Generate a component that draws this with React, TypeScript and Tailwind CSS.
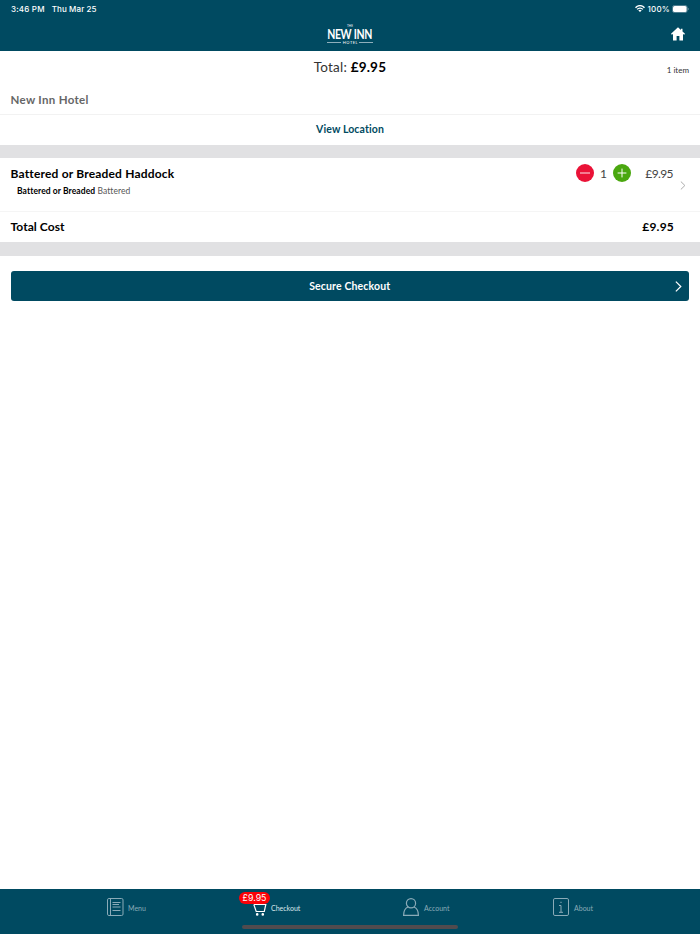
import type { ReactNode } from "react";

interface TabProps {
  label: string;
  labelClass: string;
  className: string;
  icon: ReactNode;
  badge?: string;
}

function Tab({ label, labelClass, className, icon, badge }: TabProps) {
  return (
    <button className={`relative flex h-9 shrink-0 items-center ${className}`}>
      {icon}
      <span className={`whitespace-nowrap pt-[3px] text-[7px] leading-none ${labelClass}`}>{label}</span>
      {badge && (
        <span className="absolute left-[-14px] top-[3px] flex h-3 w-[31px] items-center justify-center rounded-full bg-[#fb0207] font-['Inter'] text-[8.8px] leading-none text-white">
          {badge}
        </span>
      )}
    </button>
  );
}

function StatusBar() {
  return (
    <div className="flex h-[17px] items-center justify-between pl-[11px] pr-[11px] font-['Inter',sans-serif] text-[8px] font-medium leading-none text-white">
      <div className="flex gap-[7px]">
        <span className="tracking-[0.2px]">3:46 PM</span>
        <span className="tracking-[0.1px]">Thu Mar 25</span>
      </div>
      <div className="flex items-center">
        <svg className="mr-[3px] h-[7px] w-[10px]" viewBox="0 0 20 14" fill="none" stroke="white" strokeWidth="2.8">
          <path d="M1 5.3C6-.1 14-.1 19 5.3M4.2 8.8c3.2-3.5 8.4-3.5 11.6 0" />
          <path d="M10 14 6.6 10.8c1.9-1.7 4.9-1.7 6.8 0z" fill="white" stroke="none" />
        </svg>
        <span className="tracking-[0.2px]">100%</span>
        <svg className="ml-[2px] h-2 w-[17px]" viewBox="0 0 17 8">
          <rect x=".4" y=".4" width="14.8" height="7.2" rx="2.2" fill="none" stroke="#8cabb8" strokeWidth=".6" />
          <rect x="1" y="1" width="13.6" height="6" rx="1.5" fill="white" />
          <path d="M15.9 2.8v2.4c1-.4 1-2 0-2.4" fill="#8cabb8" />
        </svg>
      </div>
    </div>
  );
}

function Logo() {
  return (
    <div className="flex w-[45px] flex-col items-center text-white">
      <span className="text-[3px] leading-[3px]">THE</span>
      <span className="scale-x-[0.81] whitespace-nowrap text-[13px] font-bold leading-[13px] tracking-[-0.5px] [word-spacing:0.5px]">
        NEW INN
      </span>
      <div className="flex w-full items-center gap-[1px]">
        <i className="h-px flex-1 bg-[#8fafbb]" />
        <span className="pl-px text-[4px] leading-[4px] tracking-[0.5px]">HOTEL</span>
        <i className="h-px flex-1 bg-[#8fafbb]" />
      </div>
    </div>
  );
}

function Chevron({ className }: { className: string }) {
  return (
    <svg className={className} viewBox="0 0 6 10" fill="none" stroke="currentColor" strokeWidth="1.1">
      <path d="m.6.6 4.5 4.4L.6 9.4" />
    </svg>
  );
}

export default function App() {
  return (
    <div className="flex h-[934px] w-[700px] flex-col overflow-hidden bg-white font-['Lato',sans-serif] text-black">
      <header className="h-[51px] shrink-0 bg-[#004a61]">
        <StatusBar />
        <div className="grid h-[34px] grid-cols-3 items-center">
          <span />
          <div className="flex justify-center pt-px">
            <Logo />
          </div>
          <svg className="mr-[15px] h-[14px] w-[14px] justify-self-end" viewBox="0 0 14 14" fill="white">
            <path d="M7 .3 0 6.7l.8 1 1.2-.6v6.4h3.6V9h2.8v4.5H12V7.100l1.200.6.8-1-2.500-2.300V1.700h-1.600v1.300z" />
          </svg>
        </div>
      </header>

      <main className="flex-1">
        <div className="grid h-[33px] grid-cols-3 items-center px-[11px]">
          <span />
          <p className="pt-px text-center text-[13.5px] leading-none tracking-[0.2px] text-[#333]">
            Total: <b className="font-bold text-black">£9.95</b>
          </p>
          <span className="justify-self-end pt-1 text-[8px] leading-none text-[#333]">1 item</span>
        </div>
        <div className="flex h-[30.5px] items-center border-b border-[#f2f2f2] px-[10.5px] pt-px text-[11.5px] font-bold tracking-[0.32px] text-[#666]">
          New Inn Hotel
        </div>
        <div className="flex h-[30px] items-center justify-center pt-px text-[10.5px] font-bold tracking-[0.12px] text-[#004a61]">
          View Location
        </div>
        <div className="h-[13.5px] bg-[#e1e1e3]" />

        <div className="flex h-[54px] justify-between border-b border-[#f5f5f5] pl-[10.5px] pr-[14px]">
          <div className="pt-[8px]">
            <h2 className="text-[12px] font-bold leading-[15px] tracking-[0.18px]">Battered or Breaded Haddock</h2>
            <p className="ml-[6.5px] mt-[4px] text-[8.5px] leading-[12px] tracking-[0.08px] text-[#555]">
              <b className="text-black">Battered or Breaded</b> Battered
            </p>
          </div>
          <div className="flex">
            <svg className="mt-[6px] h-[18px] w-[18px]" viewBox="0 0 18 18" stroke="white" strokeWidth=".9">
              <circle cx="9" cy="9" r="9" fill="#ea1237" stroke="none" />
              <path d="M4 9h10" />
            </svg>
            <span className="mt-[8px] w-[19px] text-center text-[12px] leading-[15px] text-[#444]">1</span>
            <svg className="mt-[6px] h-[18px] w-[18px]" viewBox="0 0 18 18" stroke="white" strokeWidth="1">
              <circle cx="9" cy="9" r="9" fill="#4aa70f" stroke="none" />
              <path d="M4.6 9h8.8M9 4.6v8.8" />
            </svg>
            <span className="mt-[8px] w-[42px] text-right text-[12px] leading-[15px] tracking-[-0.6px] text-[#444]">
              £9.95
            </span>
            <Chevron className="ml-[7px] mt-[23px] h-[9px] w-[6px] text-[#aaa]" />
          </div>
        </div>
        <div className="flex h-[30px] items-center justify-between pl-[10.5px] pr-[26px] text-[12px] font-bold">
          <span className="tracking-[0.06px]">Total Cost</span>
          <span className="tracking-[0.2px]">£9.95</span>
        </div>
        <div className="h-[14px] bg-[#e1e1e3]" />

        <div className="pl-[10.5px] pr-[11px] pt-[15px]">
          <button className="flex h-[30px] w-full items-center rounded-[3px] bg-[#004a61] pr-[7px] text-white">
            <span className="flex-1 pl-[14px] pt-px text-center text-[10.5px] font-bold tracking-[0.15px]">
              Secure Checkout
            </span>
            <Chevron className="h-[11px] w-[7px]" />
          </button>
        </div>
      </main>

      <footer className="h-[45px] shrink-0 bg-[#004a61]">
        <nav className="flex h-[36px] pl-[107px] text-[#8aabb8]">
          <Tab
            label="Menu"
            labelClass="ml-[4px]"
            className="w-[146px]"
            icon={
              <svg className="h-[18px] w-[17px]" viewBox="0 0 17 18" fill="none" stroke="currentColor" strokeWidth="1">
                <rect x=".5" y=".5" width="15.5" height="17" rx="1.4" />
                <path d="M3.5.5v17M5.5 4.5h8M5.5 6.500h6.500M5.500 9h8M5.500 12.500h8" />
              </svg>
            }
          />
          <Tab
            label="Checkout"
            labelClass="ml-[4px]"
            className="w-[150px] text-[#dce7eb]"
            badge="£9.95"
            icon={
              <svg className="h-[18px] w-[14px]" viewBox="0 0 14 18" fill="none" stroke="white" strokeWidth="1.2">
                <path d="M.8 6.500h12L11.300 13.500H3.200L.8 6.500" />
                <circle cx="4.200" cy="16.400" r=".7" fill="white" />
                <circle cx="9.800" cy="16.400" r=".7" fill="white" />
              </svg>
            }
          />
          <Tab
            label="Account"
            labelClass="ml-[5px]"
            className="w-[150px]"
            icon={
              <svg className="h-[18px] w-[16px]" viewBox="0 0 16 18" fill="none" stroke="currentColor" strokeWidth="1.2">
                <circle cx="8" cy="5.200" r="4.600" />
                <path d="M5 9C2 10.200.6 12.500.6 17.300h14.800C15.400 12.500 14 10.200 11 9" />
              </svg>
            }
          />
          <Tab
            label="About"
            labelClass="ml-[5px]"
            className=""
            icon={
              <svg className="h-[18px] w-[16px]" viewBox="0 0 16 18" fill="none" stroke="currentColor" strokeWidth="1">
                <rect x=".5" y=".5" width="15" height="17" rx="1.4" />
                <path d="M6 7.500h2v6.800M6 14.300h4M7.300 4.300h1.400" />
              </svg>
            }
          />
        </nav>
        <div className="ml-[242px] h-1 w-[215.5px] rounded-full bg-[#514b4e]" />
      </footer>
    </div>
  );
}
